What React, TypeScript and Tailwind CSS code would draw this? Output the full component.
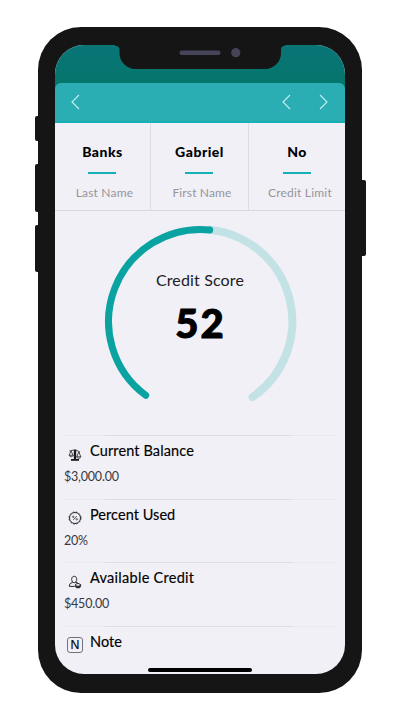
import React from "react";

const stats = [
  { value: "Banks", label: "Last Name", v: "tracking-[0.5px]", l: "ml-[4px] tracking-[0.2px]", bar: "ml-[-2px]" },
  { value: "Gabriel", label: "First Name", v: "tracking-[0.5px]", l: "ml-[5px] tracking-[0.15px]", bar: "ml-[-2px]" },
  { value: "No", label: "Credit Limit", v: "tracking-[0.3px]", l: "ml-[6px] tracking-[0.2px]", bar: "" },
];

function ScaleIcon() {
  return (
    <svg width="14" height="14" viewBox="0 0 14 14" fill="none" stroke="#2c2c30" strokeWidth="0.85">
      <path d="M1.5 3 5.5 2h2.5l4 2.2M3 3 1.2 7.3h4L3 3M10.8 3.8 8.8 8.8h4l-2-5M1.2 7.3c.4 2 3.5 2 4 0M8.8 8.8c.4 2 3.6 2 4 0" />
      <path d="M5.8 1.8h2.4v9.4H5.8z" fill="#1c1c20" stroke="none" />
      <path d="M3 11h8v1.8H3z" fill="#1c1c20" stroke="none" />
    </svg>
  );
}

function PercentIcon() {
  return (
    <svg width="14" height="14" viewBox="0 0 14 14" fill="none" stroke="#28282c">
      <circle cx="7" cy="7" r="5.5" strokeWidth="1" />
      <circle cx="7" cy="7" r="6.1" strokeWidth="0.8" strokeDasharray="1.6 1.6" />
      <path d="m5.2 9 3.6-4" strokeWidth="0.7" />
      <circle cx="5.3" cy="5.8" r="0.8" strokeWidth="0.7" />
      <circle cx="8.7" cy="8.2" r="0.8" strokeWidth="0.7" />
    </svg>
  );
}

function UserIcon() {
  return (
    <svg width="14" height="14" viewBox="0 0 14 14" fill="none" stroke="#28282c" strokeLinecap="round" strokeLinejoin="round">
      <path d="M4.6 7C3 5.6 3.2 1.3 6.2 1.3S9.4 5.6 7.8 7M4.6 7c.8 1.1 2.4 1.1 3.2 0M4.2 7.6C2.2 8 1.4 9 1.4 11.4h5M8 7.4l1.8.7" strokeWidth="1" />
      <ellipse cx="10" cy="10" rx="2.6" ry="1.5" strokeWidth="0.9" />
      <path d="M7.4 10.3v1.5c.5 1.6 4.7 1.6 5.2 0v-1.5c-.8 1.4-4.4 1.4-5.2 0z" fill="#28282c" strokeWidth="0.6" />
    </svg>
  );
}

function NoteIcon() {
  return (
    <span className="flex h-[16px] w-[16px] shrink-0 items-center justify-center rounded-[3px] border border-[#737377] font-['Open_Sans',sans-serif] text-[12px] leading-none font-semibold text-[#18181b]">
      N
    </span>
  );
}

const rows = [
  { title: "Current Balance", value: "$3,000.00", icon: <ScaleIcon />, t: "tracking-[0.12px]" },
  { title: "Percent Used", value: "20%", icon: <PercentIcon />, t: "tracking-[0.05px]" },
  { title: "Available Credit", value: "$450.00", icon: <UserIcon />, t: "tracking-[0.28px]" },
  { title: "Note", value: "", icon: <NoteIcon />, t: "tracking-[0.05px]" },
];

function Chevron({ right = false }: { right?: boolean }) {
  return (
    <svg width="9" height="16" viewBox="0 0 9 16" fill="none" stroke="#c3eeed" strokeWidth="1.1">
      <path d={right ? "M1 1l7 7-7 7" : "M8 1 1 8l7 7"} />
    </svg>
  );
}

function Notch() {
  return (
    <svg className="absolute top-0 left-[60px]" width="170" height="24" viewBox="0 0 170 24">
      <path d="M0-1V.8q4.5 0 4.5 4V8a16 16 0 0 0 16 16H150a16 16 0 0 0 16-16V4.8q0-4 4-4V-1z" fill="#151515" />
      <rect x="64.5" y="5.5" width="41" height="4.5" rx="2.2" fill="#454459" />
      <circle cx="120.8" cy="7.7" r="4.6" fill="#454459" />
    </svg>
  );
}

function Gauge() {
  return (
    <div className="relative h-[224px] shrink-0">
      <svg width="290" height="224" viewBox="55 211 290 224" fill="none" strokeLinecap="round">
        <path d="M209.7 229.7A92 92 0 0 1 252.5 397" stroke="#c2e2e5" strokeWidth="8" />
        <path d="M145.7 395.3A92 92 0 0 1 209.7 229.9" stroke="#0ba2a2" strokeWidth="7" />
      </svg>
      <div className="absolute inset-x-0 top-[58px] flex flex-col items-center">
        <span className="text-[16px] leading-[22px] tracking-[0.15px] text-[#202023]">Credit Score</span>
        <span className="mt-[8px] ml-[1px] text-[40px] leading-[48px] font-black tracking-[2px] text-black [-webkit-text-stroke:1px_black]">52</span>
      </div>
    </div>
  );
}

export default function App() {
  return (
    <div className="flex h-[720px] w-[400px] justify-center overflow-hidden bg-white pt-[26.5px] font-['Lato','Liberation_Sans',sans-serif]">
      <div className="relative h-[666px] w-[324px] rounded-[43px] bg-[#151515] px-[17px] pt-[18.5px]">
        <div className="absolute top-[89.5px] -left-[3.5px] h-[25px] w-[6px] rounded-l-[2px] bg-[#151515]" />
        <div className="absolute top-[137.5px] -left-[3.5px] h-[48px] w-[6px] rounded-l-[2px] bg-[#151515]" />
        <div className="absolute top-[198.5px] -left-[3.5px] h-[47px] w-[6px] rounded-l-[2px] bg-[#151515]" />
        <div className="absolute top-[153.5px] -right-[3.5px] h-[76px] w-[6px] rounded-r-[2px] bg-[#151515]" />

        <div className="relative flex h-[629px] w-[290px] flex-col overflow-hidden rounded-[29px] bg-[#f1f0f6]">
          <div className="h-[38px] shrink-0 bg-linear-to-b from-[#0a7477] to-[#05766c]" />
          <Notch />
          <div className="shrink-0 bg-[#05766c]">
            <div className="flex h-[40px] items-center rounded-t-[6px] border-b-[2px] border-[#15afb8] bg-[#2aaeb4] pr-[17px] pl-[16px]">
              <Chevron />
              <div className="ml-auto flex gap-[28px]">
                <Chevron />
                <Chevron right />
              </div>
            </div>
          </div>

          <div className="grid h-[88px] shrink-0 grid-cols-[96px_98px_96px] divide-x divide-[#dddce2] border-b border-[#d8d7dd]">
            {stats.map((s) => (
              <div key={s.value} className="flex flex-col items-center pt-[20px]">
                <span className={`text-[14px] leading-[18px] font-black whitespace-nowrap text-black ${s.v}`}>{s.value}</span>
                <span className={`mt-[11px] h-[2px] w-[28px] bg-[#16b1b7] ${s.bar}`} />
                <span className={`mt-[10px] text-[12px] leading-[18px] whitespace-nowrap text-[#96959b] ${s.l}`}>{s.label}</span>
              </div>
            ))}
          </div>

          <Gauge />

          <div className="flex flex-col">
            {rows.map((r) => (
              <div key={r.title} className="h-[63.6px] shrink-0">
                <div className="mr-[9px] ml-[9px] flex h-px">
                  <span className="w-[41px] bg-[#ebeaf0]" />
                  <span className="w-[188px] bg-[#dedde3]" />
                  <span className="flex-1 bg-[#e9e8ee]" />
                </div>
                <div className="flex pt-[5px] pl-[9px]">
                  <span className="flex h-[27px] w-[22px] items-center justify-center">{r.icon}</span>
                  <span className={`ml-[4px] text-[14.5px] leading-[20px] font-normal whitespace-nowrap text-black [-webkit-text-stroke:0.15px_black] ${r.t}`}>{r.title}</span>
                </div>
                <div className="pl-[9px] text-[12.5px] leading-[18px] tracking-[-0.2px] text-[#38383c]">{r.value}</div>
              </div>
            ))}
          </div>
          <div className="absolute bottom-[2px] left-[93px] h-[4px] w-[104px] rounded-full bg-black" />
        </div>
      </div>
    </div>
  );
}
